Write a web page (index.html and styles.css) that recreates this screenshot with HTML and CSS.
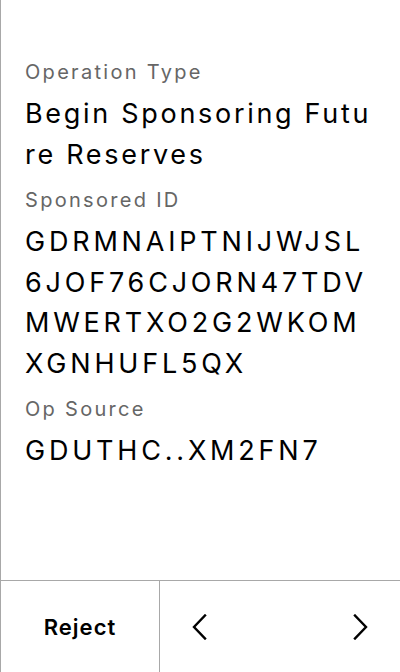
FILE: index.html
```html
<!DOCTYPE html>
<html lang="en">
<head>
<meta charset="utf-8">
<title>Operation</title>
<link rel="stylesheet" href="styles.css">
</head>
<body>
<div class="screen">
  <main class="content">
    <section class="field">
      <div class="label">Operation Type</div>
      <div class="value">Begin Sponsoring Future Reserves</div>
    </section>
    <section class="field">
      <div class="label">Sponsored ID</div>
      <div class="value address">GDRMNAIPTNIJWJSL6JOF76CJORN47TDVMWERTXO2G2WKOMXGNHUFL5QX</div>
    </section>
    <section class="field">
      <div class="label">Op Source</div>
      <div class="value address">GDUTHC..XM2FN7</div>
    </section>
  </main>
  <footer class="actions">
    <button class="reject" type="button">Reject</button>
    <div class="nav">
      <button class="nav-btn" type="button" aria-label="Previous">
        <svg width="16" height="26" viewBox="0 0 16 26"><path d="M14 1.5 L3 13 L14 24.5" fill="none" stroke="#000" stroke-width="2.4" stroke-linecap="square"/></svg>
      </button>
      <button class="nav-btn" type="button" aria-label="Next">
        <svg width="16" height="26" viewBox="0 0 16 26"><path d="M2 1.5 L13 13 L2 24.5" fill="none" stroke="#000" stroke-width="2.4" stroke-linecap="square"/></svg>
      </button>
    </div>
  </footer>
</div>
</body>
</html>
```
FILE: styles.css
```css
* { box-sizing: border-box; }
html, body {
  margin: 0;
  padding: 0;
  background: #fff;
}
body {
  font-family: Inter, "Noto Sans", sans-serif;
  color: #000;
}
.screen {
  width: 400px;
  height: 672px;
  display: flex;
  flex-direction: column;
  border-left: 1px solid #a8a8a8;
}
.content {
  flex: 1;
  padding: 58px 22px 0 24px;
}
.field {
  margin-bottom: 11px;
}
.label {
  font-size: 20px;
  line-height: 28px;
  letter-spacing: 2.3px;
  color: #666;
  margin-bottom: 8px;
}
.value {
  font-size: 27px;
  line-height: 40.5px;
  letter-spacing: 2.7px;
  color: #000;
  word-break: break-all;
}
.value.address {
  letter-spacing: 3.8px;
}
.actions {
  height: 92px;
  border-top: 1px solid #a8a8a8;
  display: flex;
}
.reject {
  width: 159px;
  border: none;
  border-right: 1px solid #a8a8a8;
  background: none;
  font-family: inherit;
  font-size: 22px;
  font-weight: 600;
  letter-spacing: 1px;
  color: #000;
  padding: 0;
  margin: 0;
}
.nav {
  flex: 1;
  display: flex;
  justify-content: space-between;
  align-items: center;
  padding: 0 31px;
}
.nav-btn {
  border: none;
  background: none;
  padding: 0;
  margin: 0;
  display: flex;
}
```
